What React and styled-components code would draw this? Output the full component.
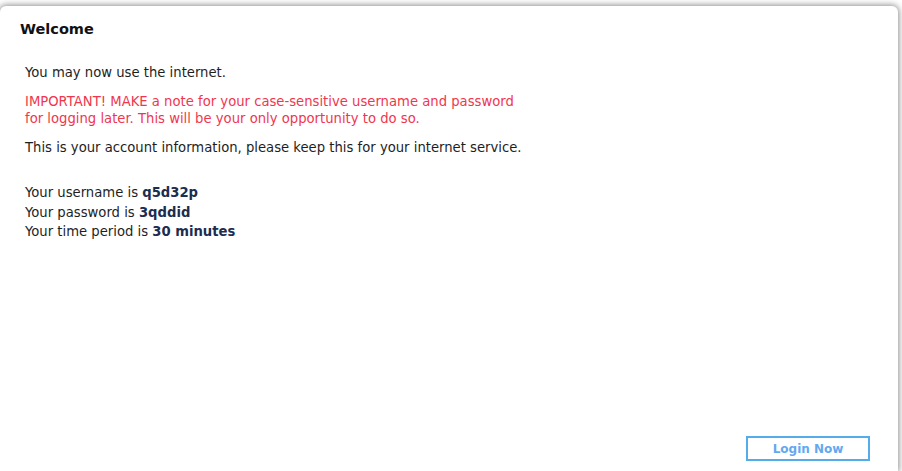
import styled, { createGlobalStyle } from "styled-components"

const GlobalStyle = createGlobalStyle`
    html, body {
        margin: 0;
        padding: 0;
        background: #ffffff;
        overflow: hidden;
    }
`

export default function App(){
    const account = [
        { label: 'Your username is', value: 'q5d32p' },
        { label: 'Your password is', value: '3qddid' },
        { label: 'Your time period is', value: '30 minutes' },
    ]

    return(
        <Page>
            <GlobalStyle/>
            <Panel>
                <Title>Welcome</Title>
                <Body>
                    <Text>You may now use the internet.</Text>
                    <Warning>
                        IMPORTANT! MAKE a note for your case-sensitive username and password<br/>
                        for logging later. This will be your only opportunity to do so.
                    </Warning>
                    <Text>This is your account information, please keep this for your internet service.</Text>
                    <Info>
                        {account.map(item => (
                            <InfoRow key={item.label}>{item.label} <b>{item.value}</b></InfoRow>
                        ))}
                    </Info>
                </Body>
                <Footer>
                    <LoginButton>Login Now</LoginButton>
                </Footer>
            </Panel>
        </Page>
    )
}

const Page = styled.div`
    width: 902px;
    height: 471px;
    padding: 6px 4px 0 0;
    box-sizing: border-box;
    overflow: hidden;
    font-family: 'DejaVu Sans', sans-serif;
`
const Panel = styled.div`
    height: 465px;
    background: #ffffff;
    border-radius: 6px 6px 0 0;
    box-shadow: 0px 0px 6px 1px rgba(0, 0, 0, 0.45);
    display: flex;
    flex-direction: column;
    padding: 14px 20px 0 20px;
    box-sizing: border-box;
`
const Title = styled.h2`
    margin: 0;
    font-size: 14.5px;
    font-weight: 700;
    color: #111111;
    line-height: 19px;
`
const Body = styled.div`
    padding: 25px 0 0 5px;
    display: flex;
    flex-direction: column;
    flex: 1;
`
const Text = styled.p`
    margin: 0 0 12px 0;
    font-size: 13.2px;
    line-height: 17px;
    color: #1e1e1e;
`
const Warning = styled(Text)`
    color: #f0364f;
`
const Info = styled.div`
    margin-top: 15px;
    display: flex;
    flex-direction: column;
`
const InfoRow = styled.div`
    font-size: 13.2px;
    line-height: 19.5px;
    color: #1e1e1e;

    b{
        color: #1c2d50;
        font-weight: 700;
    }
`
const Footer = styled.div`
    display: flex;
    justify-content: flex-end;
    padding: 0 8px 10px 0;
`
const LoginButton = styled.button`
    width: 124px;
    height: 25px;
    border: 2px solid #55aceb;
    background: #ffffff;
    color: #62a9f0;
    font-family: 'DejaVu Sans', sans-serif;
    font-size: 12px;
    font-weight: 700;
    padding: 0;
    cursor: pointer;
`
